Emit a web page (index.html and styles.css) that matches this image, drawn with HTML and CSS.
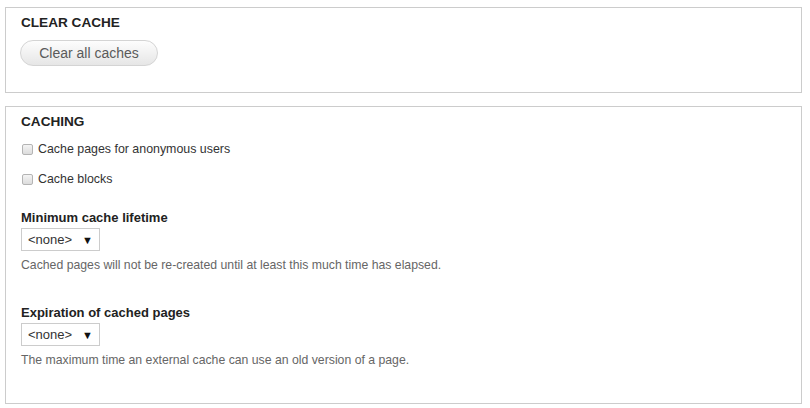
FILE: index.html
```html
<!DOCTYPE html>
<html>
<head>
  <title>Performance</title>
  <link rel="stylesheet" href="styles.css">
</head>
<body>
  <div class="panel panel-clear">
    <h2 class="panel-title">Clear cache</h2>
    <button class="btn">Clear all caches</button>
  </div>

  <div class="panel panel-caching">
    <h2 class="panel-title">Caching</h2>

    <label class="check check-first">
      <input type="checkbox">
      <span>Cache pages for anonymous users</span>
    </label>
    <label class="check">
      <input type="checkbox">
      <span>Cache blocks</span>
    </label>

    <div class="field field-first">
      <div class="field-label">Minimum cache lifetime</div>
      <div class="select"><span>&lt;none&gt;</span><span class="arrow">&#9660;</span></div>
      <div class="desc">Cached pages will not be re-created until at least this much time has elapsed.</div>
    </div>

    <div class="field">
      <div class="field-label">Expiration of cached pages</div>
      <div class="select"><span>&lt;none&gt;</span><span class="arrow">&#9660;</span></div>
      <div class="desc">The maximum time an external cache can use an old version of a page.</div>
    </div>
  </div>
</body>
</html>
```

FILE: styles.css
```css
body {
  margin: 0;
  padding: 7px 8px 0 5px;
  font-family: "Liberation Sans", Arial, sans-serif;
  font-size: 13px;
  color: #333;
  background-color: #fff;
}

.panel {
  border: 1px solid #ccc;
  padding: 7px 15px 0 15px;
}

.panel-clear {
  padding-bottom: 26px;
}

.panel-caching {
  margin-top: 13px;
  padding-bottom: 35px;
}

.panel-title {
  margin: 0;
  font-size: 13.6px;
  line-height: 16px;
  font-weight: bold;
  text-transform: uppercase;
  color: #222;
}

.btn {
  display: block;
  margin: 9px 0 0 -1px;
  height: 26px;
  width: 138px;
  padding: 0;
  border: 1px solid #d4d4d4;
  border-radius: 13px;
  background: linear-gradient(#fdfdfd, #e6e6e6);
  font-family: "Liberation Sans", Arial, sans-serif;
  font-size: 14px;
  color: #5a5a5a;
}

.check {
  display: flex;
  align-items: center;
  height: 16px;
  margin-top: 14px;
  font-size: 12.4px;
}

.check-first {
  margin-top: 11px;
}

.check input {
  appearance: none;
  width: 11px;
  height: 11px;
  margin: 1px 5px 0 1px;
  border: 1px solid #b4b4b4;
  border-radius: 2px;
  background: linear-gradient(#f4f4f4, #dcdcdc);
}

.field {
  margin-top: 32px;
}

.field-first {
  margin-top: 23px;
}

.field-label {
  font-weight: bold;
  line-height: 16px;
  color: #222;
}

.select {
  display: flex;
  justify-content: space-between;
  align-items: center;
  box-sizing: border-box;
  width: 79px;
  height: 23px;
  margin: 2px 0 0 0;
  padding: 0 6px 0 6px;
  border: 1px solid #ccc;
  color: #333;
}

.arrow {
  font-size: 11px;
  color: #111;
}

.desc {
  margin-top: 6px;
  font-size: 12.25px;
  line-height: 16px;
  color: #666;
}
```
